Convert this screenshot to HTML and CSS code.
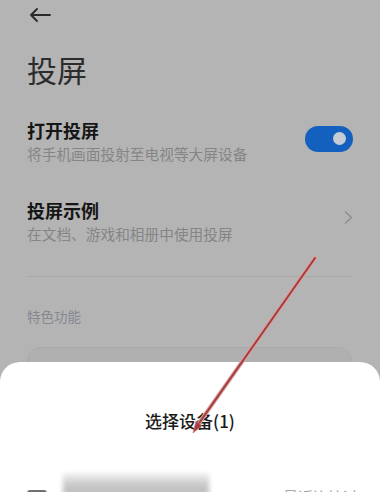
FILE: index.html
```html
<!DOCTYPE html>
<html lang="zh-CN">
<head>
<meta charset="utf-8">
<title>投屏</title>
<link rel="stylesheet" href="styles.css">
</head>
<body>
<div class="screen">
  <div class="page">
    <div class="topbar">
      <svg class="back" width="22" height="14" viewBox="0 0 22 14">
        <path d="M21 7H2M8 1L2 7l6 6" fill="none" stroke="#2a2a2a" stroke-width="1.8" stroke-linecap="round" stroke-linejoin="round"/>
      </svg>
    </div>
    <h1 class="title">投屏</h1>
    <div class="row row-first">
      <div class="texts">
        <div class="row-title">打开投屏</div>
        <div class="row-sub">将手机画面投射至电视等大屏设备</div>
      </div>
      <div class="toggle"><span class="knob"></span></div>
    </div>
    <div class="row row-second">
      <div class="texts">
        <div class="row-title">投屏示例</div>
        <div class="row-sub">在文档、游戏和相册中使用投屏</div>
      </div>
      <svg class="chevron" width="9" height="13" viewBox="0 0 9 13">
        <path d="M1.5 1l6 5.5-6 5.5" fill="none" stroke="#8c8c8c" stroke-width="1.3" stroke-linecap="round" stroke-linejoin="round"/>
      </svg>
    </div>
    <div class="divider"></div>
    <div class="section">特色功能</div>
    <div class="card"></div>
  </div>

  <div class="sheet">
    <div class="sheet-title">选择设备(1)</div>
    <div class="device">
      <span class="check"></span>
      <span class="device-name"></span>
      <span class="device-state">最近连接过</span>
    </div>
  </div>

  <svg class="pointer" width="380" height="492" viewBox="0 0 380 492">
    <line x1="315" y1="258" x2="197" y2="426" stroke="#d9a3a3" stroke-width="4" stroke-linecap="round"/>
    <line x1="315" y1="258" x2="197" y2="426" stroke="#a53d3b" stroke-width="2.1" stroke-linecap="round"/>
    <polygon points="193,433 202,425.5 196,421.2" fill="#a53d3b" stroke="#c77b7b" stroke-width="0.8"/>
  </svg>
</div>
</body>
</html>
```

FILE: styles.css
```css
* { box-sizing: border-box; }
html, body { margin: 0; padding: 0; }
body {
  width: 380px;
  height: 492px;
  overflow: hidden;
  background: #b4b4b4;
  font-family: "Noto Sans CJK SC", "Noto Sans", sans-serif;
}
.screen {
  position: relative;
  width: 380px;
  height: 492px;
  overflow: hidden;
  background: #b4b4b4;
}
.page {
  padding: 0 28px 0 27px;
}
.topbar {
  height: 30px;
  display: flex;
  align-items: flex-start;
}
.back {
  margin-top: 8px;
  margin-left: 2px;
}
.title {
  margin: 19px 0 0 0;
  font-size: 30px;
  line-height: 40px;
  font-weight: 400;
  color: #2c2c2c;
}
.row {
  display: flex;
  align-items: center;
  justify-content: space-between;
}
.row-first { margin-top: 28px; }
.row-second { margin-top: 32.5px; }
.row-title {
  font-size: 18px;
  line-height: 26px;
  font-weight: 700;
  color: #161616;
}
.row-sub {
  font-size: 14.7px;
  line-height: 21px;
  color: #858585;
}
.toggle {
  width: 48px;
  height: 26px;
  border-radius: 13px;
  background: #1460be;
  display: flex;
  align-items: center;
  justify-content: flex-end;
  padding-right: 7px;
  margin-right: -1px;
  margin-top: -4px;
}
.knob {
  width: 13px;
  height: 13px;
  border-radius: 50%;
  background: #c6ccd4;
}
.chevron {
  margin-right: -1px;
  margin-top: -6px;
}
.divider {
  margin-top: 32.5px;
  height: 1px;
  background: #a9a9a9;
}
.section {
  margin-top: 30px;
  font-size: 13.5px;
  line-height: 18px;
  color: #868891;
}
.card {
  margin-top: 22px;
  height: 60px;
  border-radius: 14px;
  background: #b0b0b0;
  border: 1px solid #aaaaaa;
}
.sheet {
  position: absolute;
  left: 0;
  right: 0;
  top: 362px;
  height: 160px;
  background: #ffffff;
  border-radius: 20px 20px 0 0;
  padding-top: 47px;
}
.sheet-title {
  text-align: center;
  font-size: 17px;
  line-height: 24px;
  font-weight: 500;
  color: #1a1a1a;
}
.device {
  margin-top: 40px;
  padding-left: 27px;
  display: flex;
  align-items: flex-start;
  height: 40px;
}
.check {
  margin-top: 17px;
  width: 20px;
  height: 20px;
  border: 2px solid #707070;
  border-radius: 3px;
}
.device-name {
  margin-left: 16px;
  width: 146px;
  height: 30px;
  border-radius: 2px;
  background: linear-gradient(#f2f2f2, #c4c4c4 45%, #bdbdbd);
  filter: blur(2.5px);
}
.device-state {
  margin-left: 74px;
  margin-top: 14px;
  font-size: 15px;
  line-height: 20px;
  color: #9a9a9a;
}
.pointer {
  position: absolute;
  left: 0;
  top: 0;
  pointer-events: none;
}
```
